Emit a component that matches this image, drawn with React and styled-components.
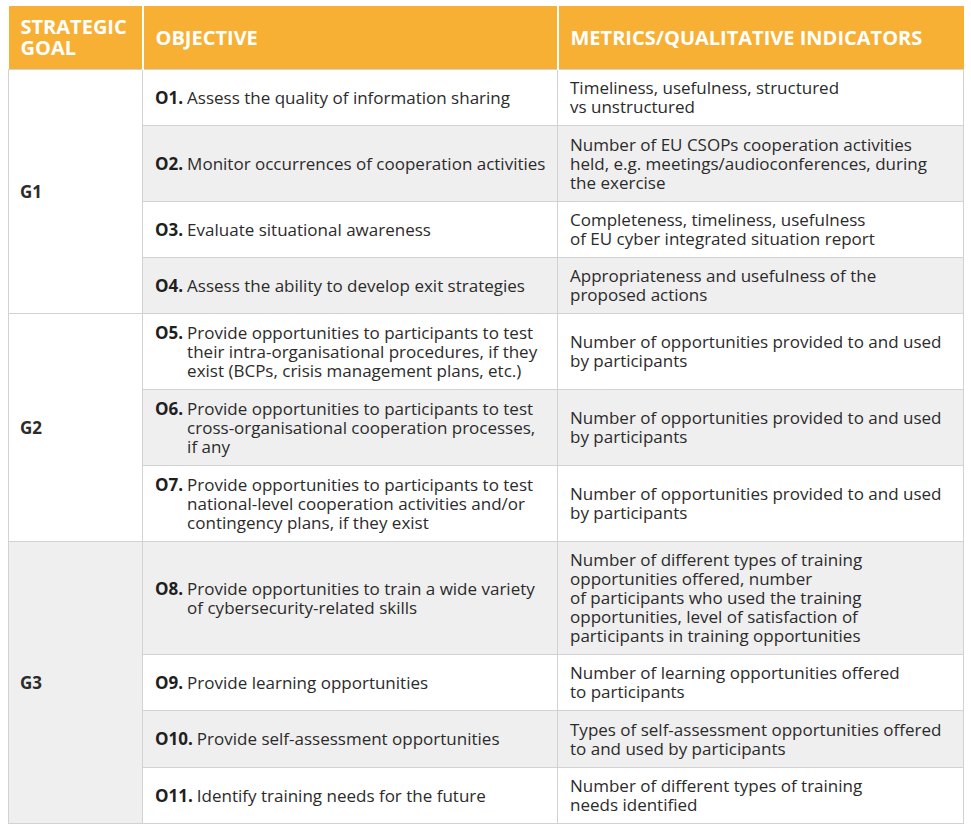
import styled, { createGlobalStyle } from "styled-components";

const GlobalStyle = createGlobalStyle`
  body {
    margin: 0;
    background: #ffffff;
    font-family: "Open Sans", "Liberation Sans", sans-serif;
    color: #2b2b2b;
  }
`;

const Page = styled.div`
  padding: 6px 8px;
`;

const Table = styled.table`
  width: 955px;
  border-collapse: collapse;
  table-layout: fixed;
  font-size: 17px;
  line-height: 19px;
`;

const HeadCell = styled.th`
  background: #f7b034;
  color: #ffffff;
  font-weight: 700;
  font-size: 20px;
  line-height: 21px;
  text-align: left;
  vertical-align: middle;
  height: 63px;
  padding: 0 12px;
  box-sizing: border-box;
  border-left: 2px solid #ffffff;
  &:first-child {
    border-left: none;
  }
`;

const Cell = styled.td`
  background: ${(p) => (p.$shade ? "#efefef" : "#ffffff")};
  border: 1px solid #d2d2d2;
  padding: 8px 10px 8px 12px;
  vertical-align: middle;
  height: ${(p) => p.$h}px;
  box-sizing: border-box;
  white-space: nowrap;
`;

const Goal = styled(Cell)`
  font-weight: 700;
  padding-left: 11px;
`;

const Objective = styled.div`
  display: flex;
`;

const Label = styled.b`
  flex: none;
  margin-right: 4px;
  font-weight: 700;
  color: #1f1f1f;
`;

const rows = [
  { goal: "G1", span: 4, id: "O1.", h: 56, obj: ["Assess the quality of information sharing"], met: ["Timeliness, usefulness, structured", "vs unstructured"] },
  { id: "O2.", h: 76, obj: ["Monitor occurrences of cooperation activities"], met: ["Number of EU CSOPs cooperation activities", "held, e.g. meetings/audioconferences, during", "the exercise"] },
  { id: "O3.", h: 56, obj: ["Evaluate situational awareness"], met: ["Completeness, timeliness, usefulness", "of EU cyber integrated situation report"] },
  { id: "O4.", h: 56, obj: ["Assess the ability to develop exit strategies"], met: ["Appropriateness and usefulness of the", "proposed actions"] },
  { goal: "G2", span: 3, id: "O5.", h: 76, obj: ["Provide opportunities to participants to test", "their intra-organisational procedures, if they", "exist (BCPs, crisis management plans, etc.)"], met: ["Number of opportunities provided to and used", "by participants"] },
  { id: "O6.", h: 76, obj: ["Provide opportunities to participants to test", "cross-organisational cooperation processes,", "if any"], met: ["Number of opportunities provided to and used", "by participants"] },
  { id: "O7.", h: 76, obj: ["Provide opportunities to participants to test", "national-level cooperation activities and/or", "contingency plans, if they exist"], met: ["Number of opportunities provided to and used", "by participants"] },
  { goal: "G3", span: 4, goalShade: true, id: "O8.", h: 113, obj: ["Provide opportunities to train a wide variety", "of cybersecurity-related skills"], met: ["Number of different types of training", "opportunities offered, number", "of participants who used the training", "opportunities, level of satisfaction of", "participants in training opportunities"] },
  { id: "O9.", h: 56, obj: ["Provide learning opportunities"], met: ["Number of learning opportunities offered", "to participants"] },
  { id: "O10.", h: 57, obj: ["Provide self-assessment opportunities"], met: ["Types of self-assessment opportunities offered", "to and used by participants"] },
  { id: "O11.", h: 56, obj: ["Identify training needs for the future"], met: ["Number of different types of training", "needs identified"] },
];

function Lines({ items }) {
  return items.map((t, i) => (
    <span key={i}>
      {i > 0 && <br />}
      {t}
    </span>
  ));
}

export default function App() {
  return (
    <Page>
      <GlobalStyle />
      <Table>
        <colgroup>
          <col style={{ width: 134 }} />
          <col style={{ width: 415 }} />
          <col style={{ width: 406 }} />
        </colgroup>
        <thead>
          <tr>
            <HeadCell>STRATEGIC<br />GOAL</HeadCell>
            <HeadCell>OBJECTIVE</HeadCell>
            <HeadCell>METRICS/QUALITATIVE INDICATORS</HeadCell>
          </tr>
        </thead>
        <tbody>
          {rows.map((r, i) => (
            <tr key={r.id}>
              {r.goal && (
                <Goal rowSpan={r.span} $shade={r.goalShade}>
                  {r.goal}
                </Goal>
              )}
              <Cell $shade={i % 2 === 1} $h={r.h}>
                <Objective>
                  <Label>{r.id}</Label>
                  <div>
                    <Lines items={r.obj} />
                  </div>
                </Objective>
              </Cell>
              <Cell $shade={i % 2 === 1} $h={r.h}>
                <Lines items={r.met} />
              </Cell>
            </tr>
          ))}
        </tbody>
      </Table>
    </Page>
  );
}
